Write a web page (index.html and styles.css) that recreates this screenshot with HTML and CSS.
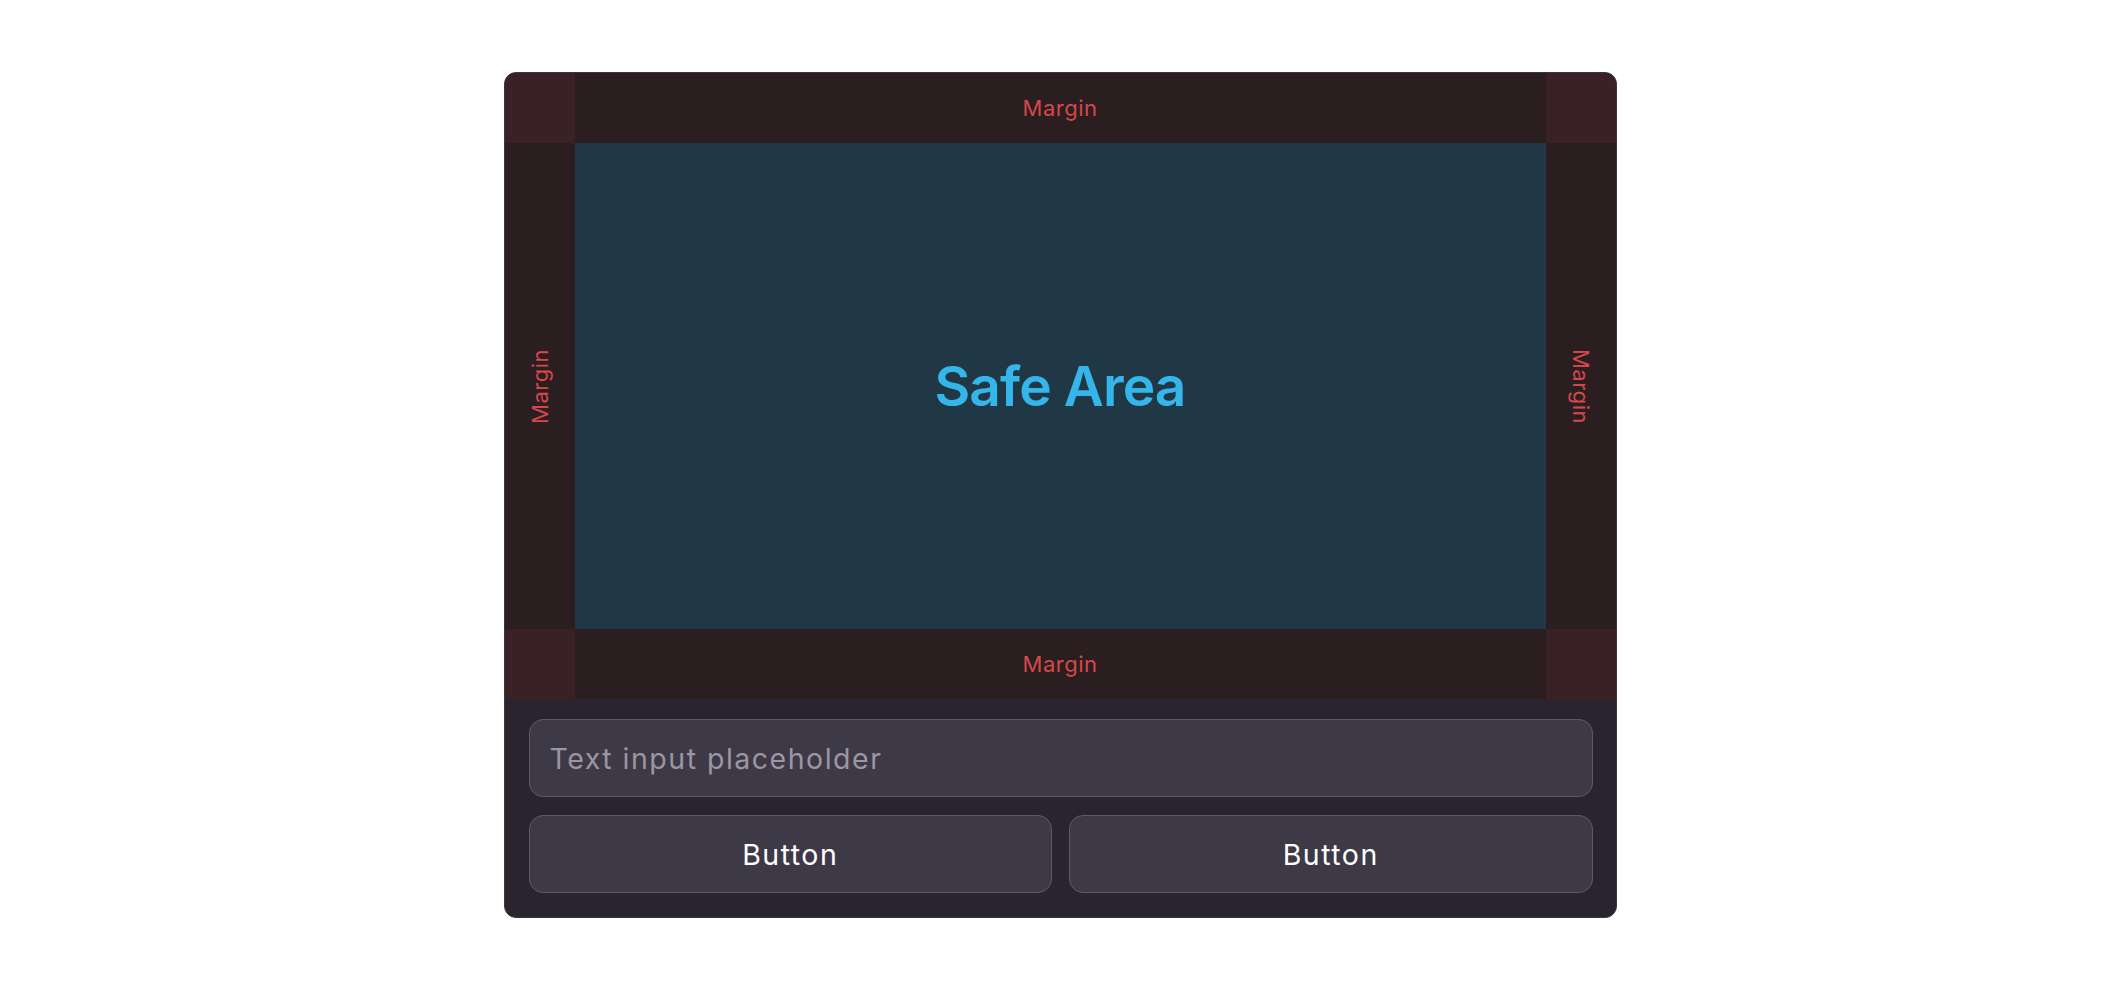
FILE: index.html
```html
<!DOCTYPE html>
<html>
<head>
<meta charset="utf-8">
<link rel="stylesheet" href="styles.css">
</head>
<body>
<div class="page">
  <div class="card">
    <div class="grid">
      <div class="corner"></div>
      <div class="margin-h"><span class="mlabel">Margin</span></div>
      <div class="corner"></div>
      <div class="margin-v"><span class="mlabel vleft">Margin</span></div>
      <div class="safe"><span class="safe-label">Safe Area</span></div>
      <div class="margin-v"><span class="mlabel vright">Margin</span></div>
      <div class="corner"></div>
      <div class="margin-h"><span class="mlabel">Margin</span></div>
      <div class="corner"></div>
    </div>
    <div class="panel">
      <div class="input">Text input placeholder</div>
      <div class="buttons">
        <div class="btn">Button</div>
        <div class="btn">Button</div>
      </div>
    </div>
  </div>
</div>
</body>
</html>
```
FILE: styles.css
```css
html, body {
  margin: 0;
  padding: 0;
  background: #ffffff;
  font-family: Inter, "Noto Sans", sans-serif;
}
.page {
  display: flex;
  justify-content: center;
  padding-top: 72px;
}
.card {
  width: 1113px;
  box-sizing: border-box;
  border: 1px solid #3b3642;
  border-radius: 12px;
  overflow: hidden;
  background: #2a2431;
}
.grid {
  display: grid;
  grid-template-columns: 70px 1fr 70px;
  grid-template-rows: 70px 486px 70px;
}
.corner {
  background: #392125;
}
.margin-h, .margin-v {
  background: #2b1e20;
  display: flex;
  align-items: center;
  justify-content: center;
}
.mlabel {
  color: #d6474c;
  font-size: 22px;
  letter-spacing: 0.5px;
  line-height: 1;
}
.vleft {
  writing-mode: vertical-rl;
  transform: rotate(180deg);
}
.vright {
  writing-mode: vertical-rl;
}
.safe {
  background: #203845;
  display: flex;
  align-items: center;
  justify-content: center;
}
.safe-label {
  color: #35b6ea;
  font-size: 55px;
  font-weight: 600;
  letter-spacing: -0.9px;
  line-height: 1;
}
.panel {
  padding: 20px 23px 24px 24px;
  display: flex;
  flex-direction: column;
  gap: 18px;
}
.input, .btn {
  height: 78px;
  box-sizing: border-box;
  border: 1.5px solid #5e5868;
  border-radius: 14px;
  background: #3e3947;
  display: flex;
  align-items: center;
  font-size: 28.5px;
  letter-spacing: 1.5px;
}
.input {
  padding-left: 20px;
  color: #9b96a2;
}
.buttons {
  display: flex;
  gap: 17px;
}
.btn {
  flex: 1;
  justify-content: center;
  color: #ffffff;
}
```
